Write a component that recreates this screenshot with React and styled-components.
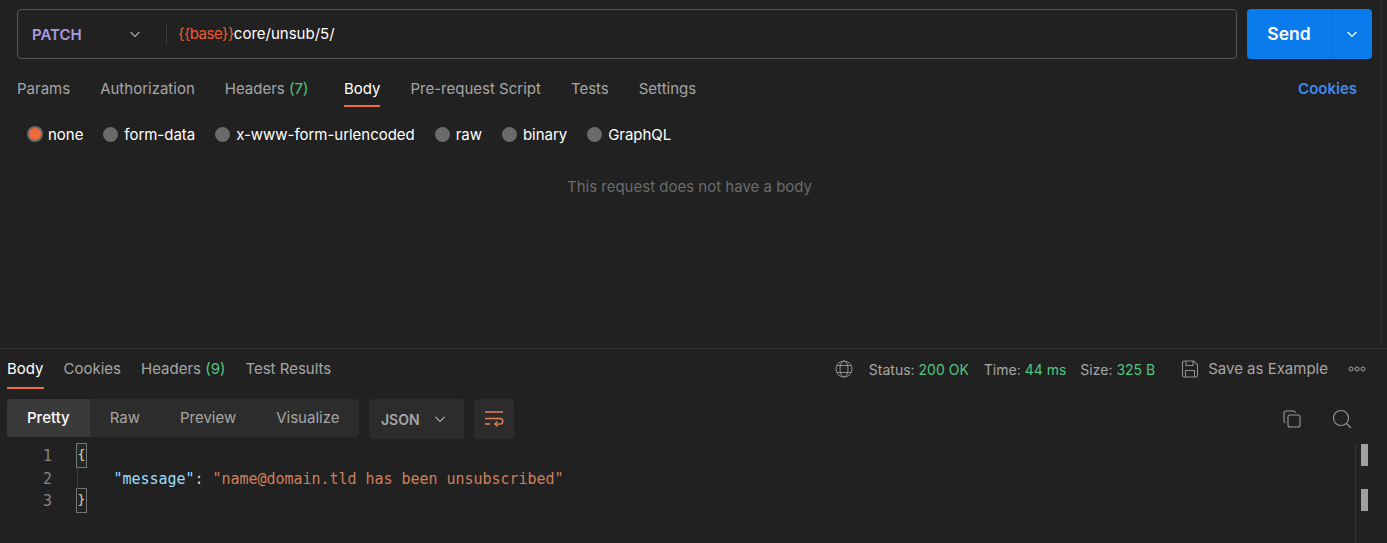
import React from "react"
import styled, { createGlobalStyle } from "styled-components"

const tabs = [
  { label: "Params" },
  { label: "Authorization" },
  { label: "Headers", count: "(7)" },
  { label: "Body", active: true },
  { label: "Pre-request Script" },
  { label: "Tests" },
  { label: "Settings" },
]
const bodyTypes = ["none", "form-data", "x-www-form-urlencoded", "raw", "binary", "GraphQL"]
const resTabs = [
  { label: "Body", active: true },
  { label: "Cookies" },
  { label: "Headers", count: "(9)" },
  { label: "Test Results" },
]
const views = ["Pretty", "Raw", "Preview", "Visualize"]

const Chevron = ({ size = 14, color = "#a6a6a6" }) => (
  <svg width={size} height={size} viewBox="0 0 14 14" fill="none" stroke={color} strokeWidth="1.2">
    <path d="M2.5 5l4.5 4.5L11.5 5" />
  </svg>
)

export default function App() {
  return (
    <Page>
      <GlobalStyle />
      <RequestPane>
        <UrlRow>
          <UrlBar>
            <Method>
              <MethodName>PATCH</MethodName>
              <Chevron />
            </Method>
            <UrlText>
              <Variable>{"{{base}}"}</Variable>core/unsub/5/
            </UrlText>
          </UrlBar>
          <SendButton>
            <SendLabel>Send</SendLabel>
            <SendArrow><Chevron color="#ffffff" /></SendArrow>
          </SendButton>
        </UrlRow>
        <TabRow>
          <Tabs $gap={30}>
            {tabs.map((t) => (
              <Tab key={t.label} $active={t.active} $height={38}>
                {t.label}
                {t.count && <Count $trail={5.6}> {t.count}</Count>}
              </Tab>
            ))}
          </Tabs>
          <CookiesLink>Cookies</CookiesLink>
        </TabRow>
        <RadioRow>
          {bodyTypes.map((b, i) => (
            <RadioItem key={b}>
              <Radio $checked={i === 0} />
              {b}
            </RadioItem>
          ))}
        </RadioRow>
        <EmptyNote>This request does not have a body</EmptyNote>
      </RequestPane>
      <ResponsePane>
        <ResponseHead>
          <Tabs $gap={20}>
            {resTabs.map((t) => (
              <Tab key={t.label} $active={t.active} $height={40}>
                {t.label}
                {t.count && <Count> {t.count}</Count>}
              </Tab>
            ))}
          </Tabs>
          <Meta>
            <svg width="18" height="18" viewBox="0 0 18 18" fill="none" stroke="#8f8f8f" strokeWidth="1">
              <circle cx="9" cy="9" r="8" />
              <ellipse cx="9" cy="9" rx="4" ry="8" />
              <path d="M1.8 5.5h14.4M1.8 12.5h14.4" />
            </svg>
            <MetaStat $ml={16}>Status: <Good>200 OK</Good></MetaStat>
            <MetaStat $ml={15}>Time: <Good>44 ms</Good></MetaStat>
            <MetaStat $ml={14}>Size: <Good>325 B</Good></MetaStat>
            <SaveButton>
              <svg width="18" height="18" viewBox="0 0 18 18" fill="none" stroke="#8f8f8f" strokeWidth="1.1">
                <path d="M2.5 1h10.2L16.5 4.8V15.5a1.5 1.5 0 0 1-1.5 1.5H3a1.5 1.5 0 0 1-1.5-1.5V2.5A1.5 1.5 0 0 1 3 1z" />
                <path d="M5 1v4.5h7V1M4.5 17v-6.5h9V17" />
              </svg>
              <SaveLabel>Save as Example</SaveLabel>
            </SaveButton>
            <svg width="18" height="6" viewBox="0 0 18 6" fill="none" stroke="#a6a6a6" strokeWidth="1">
              <circle cx="3" cy="3" r="2" />
              <circle cx="9" cy="3" r="2" />
              <circle cx="15" cy="3" r="2" />
            </svg>
          </Meta>
        </ResponseHead>
        <Toolbar>
          <Segments>
            {views.map((v, i) => (
              <Segment key={v} $active={i === 0}>{v}</Segment>
            ))}
          </Segments>
          <FormatSelect>
            JSON
            <Chevron />
          </FormatSelect>
          <WrapButton>
            <svg width="20" height="18" viewBox="0 0 20 18" fill="none" stroke="#e4805a" strokeWidth="1.4">
              <path d="M1 2h18M1 8.5h15a2.8 2.8 0 0 1 0 5.6H11" />
              <path d="M1 14h5M13.5 11.5L11 14l2.5 2.5" />
            </svg>
          </WrapButton>
          <ToolIcons>
            <svg width="18" height="18" viewBox="0 0 18 18" fill="none" stroke="#9a9a9a" strokeWidth="1.1">
              <rect x="5" y="5" width="12" height="12" rx="2" />
              <path d="M2.8 12.5A1.8 1.8 0 0 1 1 10.7V3a2 2 0 0 1 2-2h7.5A1.8 1.8 0 0 1 12.3 2.8" />
            </svg>
            <svg width="20" height="20" viewBox="0 0 20 20" fill="none" stroke="#9a9a9a" strokeWidth="1.1">
              <circle cx="9" cy="9" r="7.5" />
              <path d="M14.5 14.5L19 19" />
            </svg>
          </ToolIcons>
        </Toolbar>
        <Editor>
          <Gutter>
            <LineNo>1</LineNo>
            <LineNo>2</LineNo>
            <LineNo>3</LineNo>
          </Gutter>
          <Code>
            <CodeLine><Brace $tint>{"{"}</Brace></CodeLine>
            <CodeLine $indent>
              <Key>"message"</Key><Colon>: </Colon><Str>"name@domain.tld has been unsubscribed"</Str>
            </CodeLine>
            <CodeLine><Brace>{"}"}</Brace></CodeLine>
            <FoldGuide />
          </Code>
          <ScrollTrack>
            <ScrollMark />
            <ScrollMark />
          </ScrollTrack>
        </Editor>
      </ResponsePane>
    </Page>
  )
}

const GlobalStyle = createGlobalStyle`
  html, body { margin: 0; padding: 0; background: #212121; }
  body { font-family: Inter, "Liberation Sans", sans-serif; font-size: 15px; color: #fff; overflow: hidden; }
`

const Page = styled.div`
  width: 1387px;
  height: 543px;
  display: flex;
  flex-direction: column;
  background: #212121;
  overflow: hidden;
`

const RequestPane = styled.section`
  height: 348px;
  box-sizing: border-box;
  padding: 9px 6px 0 17px;
  border-right: 1px solid #2c2c2c;
  margin-right: 5px;
  flex-shrink: 0;
`

const UrlRow = styled.div`
  display: flex;
  gap: 10px;
  height: 50px;
  padding-right: 3px;
`

const UrlBar = styled.div`
  flex: 1;
  display: flex;
  align-items: center;
  border: 1px solid #555;
  border-radius: 4px;
  box-sizing: border-box;
`

const Method = styled.div`
  width: 149px;
  height: 22px;
  box-sizing: border-box;
  padding: 0 24px 0 14px;
  display: flex;
  align-items: center;
  justify-content: space-between;
  border-right: 1px solid #3a3a3a;
`

const MethodName = styled.span`
  color: #ab9ae0;
  font-weight: 600;
`

const UrlText = styled.div`
  margin-left: 11px;
  padding-bottom: 2px;
  color: #fff;
`

const Variable = styled.span`
  color: #f15a2e;
  letter-spacing: -0.5px;
`

const SendButton = styled.div`
  width: 125px;
  display: flex;
  background: #097bed;
  border-radius: 4px;
`

const SendLabel = styled.div`
  width: 84px;
  padding-bottom: 1px;
  display: flex;
  align-items: center;
  justify-content: center;
  font-size: 17.5px;
  font-weight: 600;
  color: #fff;
  border-right: 1px solid #0a6fd4;
`

const SendArrow = styled.div`
  flex: 1;
  display: flex;
  align-items: center;
  justify-content: center;
`

const TabRow = styled.div`
  display: flex;
  justify-content: space-between;
  align-items: flex-start;
  margin-top: 10px;
  padding-right: 18px;
`

const Tabs = styled.div`
  display: flex;
  gap: ${(p) => p.$gap}px;
`

const Tab = styled.div`
  height: ${(p) => p.$height}px;
  box-sizing: border-box;
  padding-top: 10px;
  line-height: 20px;
  color: ${(p) => (p.$active ? "#ffffff" : "#a6a6a6")};
  border-bottom: 2px solid ${(p) => (p.$active ? "#f26b3a" : "transparent")};
  white-space: pre;
`

const Count = styled.span`
  color: #4fc77f;
  margin-right: ${(p) => p.$trail || 0}px;
`

const CookiesLink = styled.div`
  margin-top: 10px;
  line-height: 20px;
  color: #3f8cf0;
  font-weight: 600;
`

const RadioRow = styled.div`
  display: flex;
  gap: 20px;
  margin-top: 17px;
  padding-left: 10px;
  height: 20px;
  letter-spacing: -0.03px;
`

const RadioItem = styled.label`
  display: flex;
  align-items: center;
  gap: 6px;
  padding-top: 2px;
  color: #fff;
  line-height: 20px;
`

const Radio = styled.span`
  width: ${(p) => (p.$checked ? "16px" : "15px")};
  height: ${(p) => (p.$checked ? "16px" : "15px")};
  margin-right: ${(p) => (p.$checked ? "-1px" : "0")};
  margin-bottom: 2px;
  border-radius: 50%;
  box-sizing: border-box;
  background: ${(p) => (p.$checked ? "#f26b3a" : "#6b6b6b")};
  border: 2px solid #6b6b6b;
`

const EmptyNote = styled.div`
  margin-top: 33px;
  padding-right: 13px;
  text-align: center;
  line-height: 20px;
  color: #6b6b6b;
`

const ResponsePane = styled.section`
  flex: 1;
  border-top: 1px solid #2f2f2f;
  display: flex;
  flex-direction: column;
  min-height: 0;
`

const ResponseHead = styled.div`
  display: flex;
  justify-content: space-between;
  padding: 0 21px 0 7px;
`

const Meta = styled.div`
  display: flex;
  align-items: center;
  height: 40px;
  color: #a6a6a6;
`

const MetaStat = styled.span`
  margin-left: ${(p) => p.$ml}px;
  font-size: 14px;
  white-space: pre;
`

const Good = styled.span`
  color: #4fc77f;
`

const SaveButton = styled.div`
  display: flex;
  align-items: center;
  gap: 9px;
  margin: 0 20px 0 26px;
`

const SaveLabel = styled.span`
  padding-bottom: 2px;
`

const Toolbar = styled.div`
  display: flex;
  align-items: flex-start;
  margin-top: 10px;
  padding: 0 35px 0 7px;
`

const Segments = styled.div`
  display: flex;
  width: 352px;
  height: 38px;
  background: #2c2c2c;
  border-radius: 4px;
  overflow: hidden;
`

const Segment = styled.div`
  padding: 0 20px 1px;
  display: flex;
  align-items: center;
  color: ${(p) => (p.$active ? "#ffffff" : "#a6a6a6")};
  font-weight: ${(p) => (p.$active ? 500 : 400)};
  background: ${(p) => (p.$active ? "#3a3a3a" : "transparent")};
`

const FormatSelect = styled.div`
  width: 95px;
  height: 40px;
  margin-left: 10px;
  box-sizing: border-box;
  padding: 0 17px 0 12px;
  display: flex;
  align-items: center;
  justify-content: space-between;
  background: #2c2c2c;
  border-radius: 4px;
  color: #a6a6a6;
  font-weight: 600;
  font-size: 14px;
`

const WrapButton = styled.div`
  width: 40px;
  height: 40px;
  margin-left: 10px;
  display: flex;
  align-items: center;
  justify-content: center;
  background: #2c2c2c;
  border-radius: 4px;
`

const ToolIcons = styled.div`
  margin-left: auto;
  height: 40px;
  display: flex;
  align-items: center;
  gap: 31px;
`

const Editor = styled.div`
  flex: 1;
  display: flex;
  margin-top: 6px;
  min-height: 0;
  font-family: "DejaVu Sans Mono", monospace;
  font-size: 15px;
  letter-spacing: -0.03px;
`

const Gutter = styled.div`
  width: 52px;
  text-align: right;
`

const LineNo = styled.div`
  height: 22.5px;
  line-height: 22.5px;
  color: #858585;
  font-size: 15px;
`

const Code = styled.div`
  flex: 1;
  position: relative;
  padding-left: 25px;
`

const CodeLine = styled.div`
  height: 22.5px;
  line-height: 22.5px;
  padding-left: ${(p) => (p.$indent ? "36.5px" : "0")};
  white-space: pre;
`

const Brace = styled.span`
  display: inline-block;
  vertical-align: top;
  margin-top: -1px;
  width: 9px;
  height: 22.5px;
  box-sizing: border-box;
  outline: 1px solid #777;
  background: ${(p) => (p.$tint ? "#1f2a27" : "transparent")};
  color: #e8dca8;
  font-size: 13px;
  text-align: center;
`

const FoldGuide = styled.div`
  position: absolute;
  left: 25px;
  top: 21px;
  height: 23px;
  border-left: 1px solid #3c3c3c;
`

const Key = styled.span`
  color: #9cdcfe;
`

const Colon = styled.span`
  color: #d4d4d4;
`

const Str = styled.span`
  color: #ce7f5c;
`

const ScrollTrack = styled.div`
  width: 32px;
  margin-top: -1px;
  box-sizing: border-box;
  border-left: 1px solid #333;
  padding-left: 5px;
  display: flex;
  flex-direction: column;
  gap: 23px;
`

const ScrollMark = styled.div`
  width: 7px;
  height: 22px;
  background: #a0a0a0;
`
